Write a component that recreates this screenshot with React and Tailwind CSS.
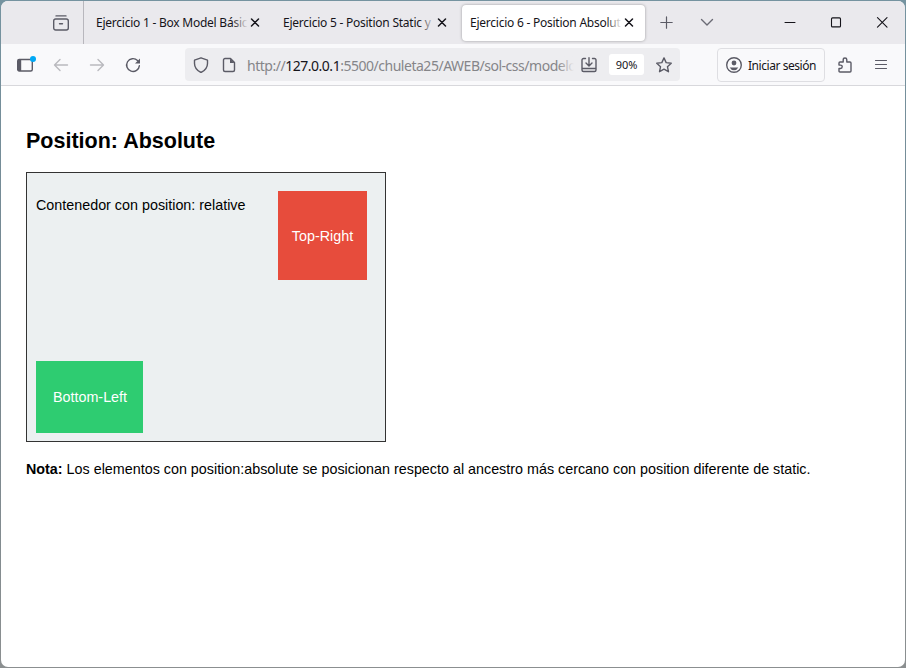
import React from 'react';

function Icon({ className = '', size = 16, sw = 1.4, children }) {
  return (
    <svg
      className={`block shrink-0 ${className}`}
      width={size}
      height={size}
      viewBox={`0 0 ${size} ${size}`}
      fill="none"
      stroke="currentColor"
      strokeWidth={sw}
      strokeLinecap="round"
      strokeLinejoin="round"
    >
      {children}
    </svg>
  );
}

function Tab({ title, className, fade }) {
  return (
    <div className={`flex shrink-0 items-center ${className}`}>
      <div className="relative w-[152px] shrink-0 overflow-hidden tracking-[-0.24px] whitespace-nowrap">
        {title}
        <div className={`absolute inset-y-0 right-0 w-4 bg-linear-to-r from-transparent ${fade}`} />
      </div>
      <Icon size={10} sw={1.5} className="ml-[2px] text-[#15141a]">
        <path d="M1.500 1l7 7M8.500 1l-7 7" />
      </Icon>
    </div>
  );
}

function TabBar() {
  return (
    <div className="flex h-[43px] shrink-0 items-center bg-[#eae9ed] font-['Noto_Sans',sans-serif] text-[12px] text-[#15141a]">
      <div className="flex h-full w-[83px] shrink-0 items-center border-r border-[#b8b7bd] pl-[52px]">
        <Icon className="text-[#5b5b66]">
          <path d="M3 .9h10" />
          <rect x=".7" y="4" width="14.6" height="11" rx="2" />
          <path d="M6.5 8.7h3" />
        </Icon>
      </div>
      <Tab title="Ejercicio 1 - Box Model Básic" className="w-[187px] pl-3" fade="to-[#eae9ed]" />
      <Tab title="Ejercicio 5 - Position Static y" className="w-[191px] pl-3" fade="to-[#eae9ed]" />
      <Tab
        title="Ejercicio 6 - Position Absolut"
        className="h-9 w-[183px] rounded-[4px] bg-white pl-2 shadow-[0_0_3px_rgba(0,0,0,0.35)]"
        fade="to-white"
      />
      <Icon size={13} sw={1.2} className="ml-[15px] text-[#5b5b66]">
        <path d="M6.5 .8v11.4M.8 6.5h11.4" />
      </Icon>
      <Icon size={14} className="ml-[27px] text-[#6b6b75]">
        <path d="M1.500 3.500L7 9l5.500-5.500" />
      </Icon>
      <div className="ml-auto flex items-center pr-[17px] text-[#15141a]">
        <Icon size={12} sw={1} className="mr-[34px]"><path d="M1 5.500h10" /></Icon>
        <Icon size={12} sw={1.1} className="mr-[34px]"><rect x="1.500" y=".9" width="9" height="9" rx="1" /></Icon>
        <Icon size={12} sw={1.1}><path d="M1.500 .700l9.500 9.500M11 .700L1.500 10.200" /></Icon>
      </div>
    </div>
  );
}

function Toolbar() {
  return (
    <div className="flex h-[42px] shrink-0 items-center border-b border-[#d8d8dc] bg-[#f9f9fb] text-[#5b5b66]">
      <div className="relative ml-4 shrink-0">
        <Icon>
          <rect x=".7" y="2.500" width="14.600" height="11.500" rx="1.500" />
          <path d="M.7 4v8.500q0 1.500 1.500 1.500h2V2.500h-2Q.7 2.500 .7 4Z" fill="currentColor" stroke="none" />
        </Icon>
        <div className="absolute -top-px left-[13px] size-[6px] rounded-full bg-[#00a8f5]" />
      </div>
      <Icon className="ml-5 text-[#b9b9be]"><path d="M14.500 8h-13M7 2.500L1.500 8 7 13.500" /></Icon>
      <Icon className="ml-5 text-[#b9b9be]"><path d="M1.500 8h13M9 2.500L14.500 8 9 13.500" /></Icon>
      <Icon className="ml-5">
        <path d="M12.500 3.500A6.400 6.400 0 1 0 14.400 8.600" />
        <path d="M15 1.500v5H10Z" fill="currentColor" stroke="none" />
      </Icon>
      <div className="ml-[44px] flex h-[33px] w-[495px] shrink-0 items-center rounded-[4px] bg-[#ededf0] pl-2">
        <Icon><path d="M8 .8L14.500 3.200v3.300c0 4-2.500 7-6.500 9-4-2-6.500-5-6.500-9V3.200Z" /></Icon>
        <Icon className="ml-3">
          <path d="M4 1.500h5.500l4 4V13a1.500 1.500 0 0 1-1.500 1.500H4A1.500 1.500 0 0 1 2.500 13V3A1.500 1.500 0 0 1 4 1.500Z" />
          <path d="M9 1.500v4.500h4.500Z" fill="currentColor" stroke="none" />
        </Icon>
        <div className="relative ml-[10px] w-[327px] shrink-0 overflow-hidden pt-0.5 font-['Noto_Sans',sans-serif] text-[14px] tracking-[-0.48px] whitespace-nowrap text-[#858589]">
          http://<span className="text-[#15141a]">127.0.0.1</span>:5500/chuleta25/AWEB/sol-css/modelo
          <div className="absolute inset-y-0 right-0 w-4 bg-linear-to-r from-transparent to-[#ededf0]" />
        </div>
        <Icon className="ml-[7px]">
          <path d="M4.500 1.500H2.500A1.500 1.500 0 0 0 1 3v10a1.500 1.500 0 0 0 1.500 1.500h11A1.500 1.500 0 0 0 15 13V3a1.500 1.500 0 0 0-1.500-1.500h-2M8 .8v8M5 6l3 3 3-3M1 11.500h14" />
        </Icon>
        <div className="ml-3 flex h-[21px] w-[35px] shrink-0 items-center justify-center rounded-[3px] bg-white pt-0.5 font-['Noto_Sans',sans-serif] text-[11px] text-[#15141a]">90%</div>
        <Icon className="ml-3"><path d="M8 .9l2.150 4.700 5.100.600-3.800 3.450 1 5.050L8 12.200 3.550 14.700l1-5.050L.75 6.200l5.100-.600Z" /></Icon>
      </div>
      <div className="ml-[37px] flex h-[34px] w-[108px] shrink-0 items-center rounded-[4px] border border-[#dedee2] pl-2">
        <Icon>
          <circle cx="8" cy="8" r="7.300" />
          <circle cx="8" cy="6" r="2.400" fill="currentColor" stroke="none" />
          <path d="M3.700 10.500h8.600Q11 13.200 8 13.200T3.700 10.500Z" fill="currentColor" stroke="none" />
        </Icon>
        <span className="ml-[6px] pt-0.5 font-['Noto_Sans',sans-serif] text-[12px] tracking-[-0.45px] whitespace-nowrap text-[#15141a]">Iniciar sesión</span>
      </div>
      <Icon className="ml-3">
        <path d="M2 7V6Q2 5 3 5h3.200V2.800a1.800 1.800 0 0 1 3.600 0V5H13q1 0 1 1V14q0 1-1 1H3q-1 0-1-1v-2.500h1.500a1.700 1.700 0 0 0 0-3.400H2Z" />
      </Icon>
      <Icon className="ml-5" sw={1.2}><path d="M2.500 3.500h11M2.500 7.500h11M2.500 11.500h11" /></Icon>
    </div>
  );
}

export default function App() {
  return (
    <div className="h-[668px] w-[906px] overflow-hidden bg-linear-to-b from-[#7593a0] via-[#75868f] to-[#8b8f90] p-px">
      <div className="flex h-full flex-col overflow-hidden rounded-[7px] bg-white">
        <TabBar />
        <Toolbar />
        <main className="pl-[25px] font-['Liberation_Sans',Arial,sans-serif] text-[14.34px] leading-[17px] text-black">
          <h2 className="mt-[43px] text-[21.5px] leading-6 font-bold">Position: Absolute</h2>
          <div className="relative mt-[19px] h-[270px] w-[360px] border border-[#333] bg-[#ecf0f1] px-[9px] pt-6">
            <p>Contenedor con position: relative</p>
            <div className="absolute top-[18px] right-[18px] flex size-[89px] items-center justify-center bg-[#e74c3c] pt-0.5 text-white">Top-Right</div>
            <div className="absolute bottom-2 left-[9px] flex h-[72px] w-[107px] items-center justify-center bg-[#2ecc71] pl-px text-white">Bottom-Left</div>
          </div>
          <p className="mt-[19px] whitespace-nowrap"><strong>Nota:</strong> Los elementos con position:absolute se posicionan respecto al ancestro más cercano con position diferente de static.</p>
        </main>
      </div>
    </div>
  );
}
